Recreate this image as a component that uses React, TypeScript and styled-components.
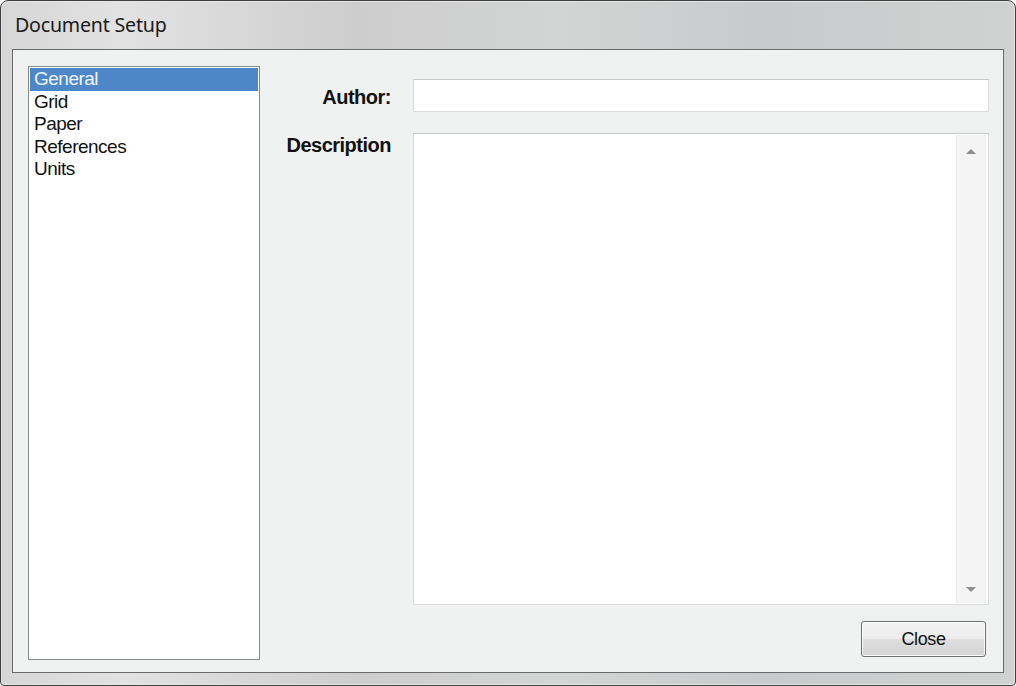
import styled, { createGlobalStyle } from 'styled-components'

const GlobalStyle = createGlobalStyle`
  html, body {
    margin: 0;
    padding: 0;
    background: #ffffff;
  }
  body {
    font-family: "Liberation Sans", Arial, sans-serif;
  }
`

const Window = styled.div`
  box-sizing: border-box;
  width: 1016px;
  height: 686px;
  display: flex;
  flex-direction: column;
  border: 1px solid #3f3f3f;
  border-radius: 8px 8px 4px 4px;
  box-shadow: inset 0 0 0 1px #e6e6e6;
  background: linear-gradient(
    to right,
    #d6d6d6 0%,
    #e2e2e2 12%,
    #cdcdcd 35%,
    #d3d4d4 55%,
    #c9cacb 75%,
    #d0d1d1 100%
  );
  padding: 0 11px 12px 11px;
  overflow: hidden;
`

const TitleBar = styled.div`
  height: 48px;
  display: flex;
  align-items: center;
  padding-left: 3px;
  padding-bottom: 1px;
  box-sizing: border-box;
  font-family: "Noto Sans", "Open Sans", sans-serif;
  font-size: 19.6px;
  color: #1a1a1a;
  letter-spacing: -0.2px;
`

const Client = styled.div`
  flex: 1;
  display: flex;
  border: 1px solid #6a6a6a;
  background: #f0f1f1;
  padding: 16px 14px 12px 15px;
  min-height: 0;
`

const ListBox = styled.ul`
  box-sizing: border-box;
  width: 232px;
  margin: 0;
  padding: 1px;
  list-style: none;
  background: #ffffff;
  border: 1px solid #8a8a8a;
  font-size: 19px;
  letter-spacing: -0.5px;
`

const ListItem = styled.li<{ selected?: boolean }>`
  height: 22.5px;
  line-height: 22px;
  padding-left: 4px;
  color: ${({ selected }) => (selected ? '#eef4ff' : '#111111')};
  background: ${({ selected }) => (selected ? '#4d87c7' : 'transparent')};
`

const Form = styled.div`
  flex: 1;
  display: grid;
  grid-template-columns: 1fr 576px;
  grid-template-rows: 33px 472px auto;
  column-gap: 20px;
  row-gap: 21px;
  padding-top: 13px;
`

const Label = styled.div<{ top?: boolean }>`
  font-size: 20px;
  font-weight: bold;
  color: #111111;
  text-align: right;
  padding-right: 2px;
  letter-spacing: -0.5px;
  align-self: ${({ top }) => (top ? 'start' : 'center')};
  padding-top: ${({ top }) => (top ? '1px' : '4px')};
`

const TextInput = styled.div`
  box-sizing: border-box;
  background: #ffffff;
  border: 1px solid #dcdcdc;
  border-top-color: #c9c9c9;
`

const TextArea = styled.div`
  box-sizing: border-box;
  display: flex;
  justify-content: flex-end;
  background: #ffffff;
  border: 1px solid #dcdcdc;
  border-top-color: #c9c9c9;
  padding: 1px 2px 1px 0;
`

const ScrollBar = styled.div`
  width: 28px;
  display: flex;
  flex-direction: column;
  justify-content: space-between;
  align-items: center;
  background: #f4f4f4;
  border-left: 1px solid #ececec;
  border-right: 1px solid #ececec;
  padding: 14px 0 11px;
`

const Arrow = styled.div<{ down?: boolean }>`
  width: 0;
  height: 0;
  border-left: 5px solid transparent;
  border-right: 5px solid transparent;
  ${({ down }) =>
    down
      ? 'border-top: 5px solid #8c8c8c;'
      : 'border-bottom: 5px solid #8c8c8c;'}
`

const ButtonRow = styled.div`
  grid-column: 2;
  display: flex;
  justify-content: flex-end;
  padding-right: 3px;
  margin-top: -5px;
`

const Button = styled.button`
  width: 125px;
  height: 36px;
  border: 1px solid #707070;
  border-radius: 3px;
  box-shadow: inset 0 0 0 1px #fbfbfb;
  background: linear-gradient(
    to bottom,
    #f4f4f4 0%,
    #ececec 48%,
    #dedede 52%,
    #d3d3d3 100%
  );
  font-family: "Liberation Sans", Arial, sans-serif;
  font-size: 18px;
  letter-spacing: -0.4px;
  color: #111111;
  padding: 0;
`

const items = ['General', 'Grid', 'Paper', 'References', 'Units']

export default function App() {
  return (
    <>
      <GlobalStyle />
      <Window>
        <TitleBar>Document Setup</TitleBar>
        <Client>
          <ListBox>
            {items.map((item, i) => (
              <ListItem key={item} selected={i === 0}>
                {item}
              </ListItem>
            ))}
          </ListBox>
          <Form>
            <Label>Author:</Label>
            <TextInput />
            <Label top>Description</Label>
            <TextArea>
              <ScrollBar>
                <Arrow />
                <Arrow down />
              </ScrollBar>
            </TextArea>
            <ButtonRow>
              <Button>Close</Button>
            </ButtonRow>
          </Form>
        </Client>
      </Window>
    </>
  )
}
